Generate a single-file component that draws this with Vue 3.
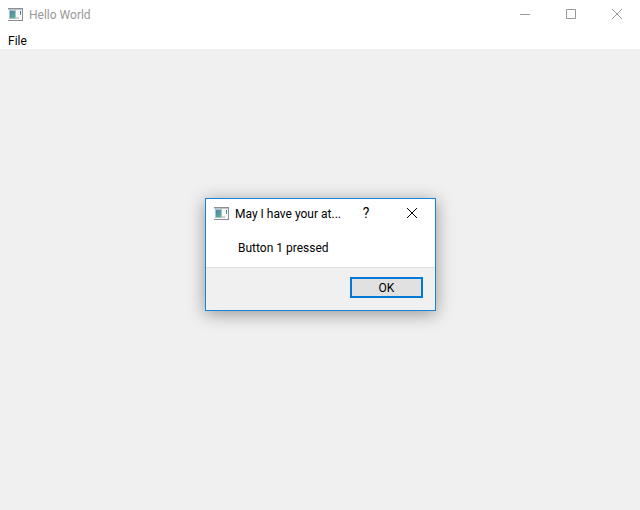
<script setup>
import { ref } from 'vue'

const dialogOpen = ref(true)
</script>

<template>
  <div class="window">
    <header class="titlebar">
      <svg class="app-icon" viewBox="0 0 15 13" aria-hidden="true">
        <defs>
          <linearGradient id="main-pic" x1="0" y1="0" x2="1" y2="1">
            <stop offset="0" stop-color="#4a80b4" />
            <stop offset="1" stop-color="#62b487" />
          </linearGradient>
        </defs>
        <rect x="0" y="0" width="15" height="13" fill="#8b8e94" />
        <rect x="0" y="2" width="14" height="10" fill="#f8f8fa" />
        <rect x="0" y="1" width="14" height="1" fill="#bfc2c6" />
        <rect x="1" y="2" width="7" height="9" fill="#a9c4cf" />
        <rect x="2" y="3" width="5" height="7" fill="url(#main-pic)" />
        <rect x="8" y="9" width="3" height="2" fill="#ced0d2" />
        <rect x="12" y="3" width="1" height="2" fill="#3f66b0" />
        <rect x="12" y="5" width="1" height="2" fill="#52a578" />
      </svg>
      <h1 class="title">Hello World</h1>
      <div class="controls">
        <button type="button" class="control" aria-label="Minimize">
          <svg class="glyph" viewBox="0 0 10 10"><path d="M0 5.5H10" /></svg>
        </button>
        <button type="button" class="control" aria-label="Maximize">
          <svg class="glyph" viewBox="0 0 10 10"><path d="M.5 .5H9.5V9.5H.5Z" /></svg>
        </button>
        <button type="button" class="control" aria-label="Close">
          <svg class="glyph" viewBox="0 0 10 10"><path d="M0 0L10 10M10 0L0 10" /></svg>
        </button>
      </div>
    </header>

    <nav class="menubar">
      <button type="button" class="menu">File</button>
    </nav>

    <main class="content"></main>

    <section v-if="dialogOpen" class="dialog" role="dialog" aria-labelledby="dialog-title">
      <header class="dialog-bar">
        <svg class="app-icon" viewBox="0 0 15 13" aria-hidden="true">
          <defs>
            <linearGradient id="dialog-pic" x1="0" y1="0" x2="1" y2="1">
              <stop offset="0" stop-color="#4a80b4" />
              <stop offset="1" stop-color="#62b487" />
            </linearGradient>
          </defs>
          <rect x="0" y="0" width="15" height="13" fill="#8b8e94" />
          <rect x="0" y="2" width="14" height="10" fill="#f8f8fa" />
          <rect x="0" y="1" width="14" height="1" fill="#bfc2c6" />
          <rect x="1" y="2" width="7" height="9" fill="#a9c4cf" />
          <rect x="2" y="3" width="5" height="7" fill="url(#dialog-pic)" />
          <rect x="8" y="9" width="3" height="2" fill="#ced0d2" />
          <rect x="12" y="3" width="1" height="2" fill="#3f66b0" />
          <rect x="12" y="5" width="1" height="2" fill="#52a578" />
        </svg>
        <h2 id="dialog-title" class="title">May I have your at...</h2>
        <div class="controls">
          <button type="button" class="control help" aria-label="Help">?</button>
          <button type="button" class="control" aria-label="Close" @click="dialogOpen = false">
            <svg class="glyph" viewBox="0 0 10 10"><path d="M0 0L10 10M10 0L0 10" /></svg>
          </button>
        </div>
      </header>
      <p class="message">Button 1 pressed</p>
      <footer class="actions">
        <button type="button" class="ok" @click="dialogOpen = false">OK</button>
      </footer>
    </section>
  </div>
</template>

<style>
body {
  margin: 0;
}
</style>

<style scoped>
.window {
  position: relative;
  display: flex;
  flex-direction: column;
  min-height: 100vh;
  background: #f0f0f0;
  color: #000;
  font-family: "Segoe UI", Roboto, "Open Sans", sans-serif;
  font-size: 12px;
  line-height: 16px;
}

button {
  margin: 0;
  padding: 0;
  border: 0;
  background: none;
  color: inherit;
  font: inherit;
}

.titlebar,
.dialog-bar {
  display: flex;
  align-items: center;
  gap: 6px;
  height: 28px;
  padding-left: 8px;
  background: #fff;
}

.titlebar {
  color: #999;
}

.app-icon {
  flex: none;
  width: 15px;
  height: 13px;
}

.title {
  flex: 1;
  min-width: 0;
  margin: 0;
  padding-top: 2px;
  font-size: 12px;
  font-weight: 400;
  line-height: 16px;
  white-space: nowrap;
}

.controls {
  display: flex;
}

.control {
  display: flex;
  align-items: center;
  justify-content: center;
  width: 46px;
  height: 28px;
}

.help {
  font-size: 14px;
}

.glyph {
  width: 10px;
  height: 10px;
  overflow: visible;
  fill: none;
  stroke: currentColor;
  stroke-width: 1;
}

.menubar {
  display: flex;
  padding: 5px 8px 0;
  background: #fff;
}

.content {
  flex: 1;
}

.dialog {
  position: absolute;
  top: 198px;
  left: 205px;
  width: 229px;
  border: 1px solid #1883d7;
  background: #fff;
  box-shadow: 0 3px 16px rgba(0, 0, 0, 0.38);
}

.message {
  margin: 0;
  padding: 13px 32px 11px;
}

.actions {
  display: flex;
  justify-content: flex-end;
  padding: 9px 12px 12px;
  border-top: 1px solid #dfdfdf;
  background: #f0f0f0;
}

.ok {
  width: 73px;
  height: 21px;
  border: 2px solid #0078d7;
  background: #e1e1e1;
  line-height: 16px;
}
</style>
